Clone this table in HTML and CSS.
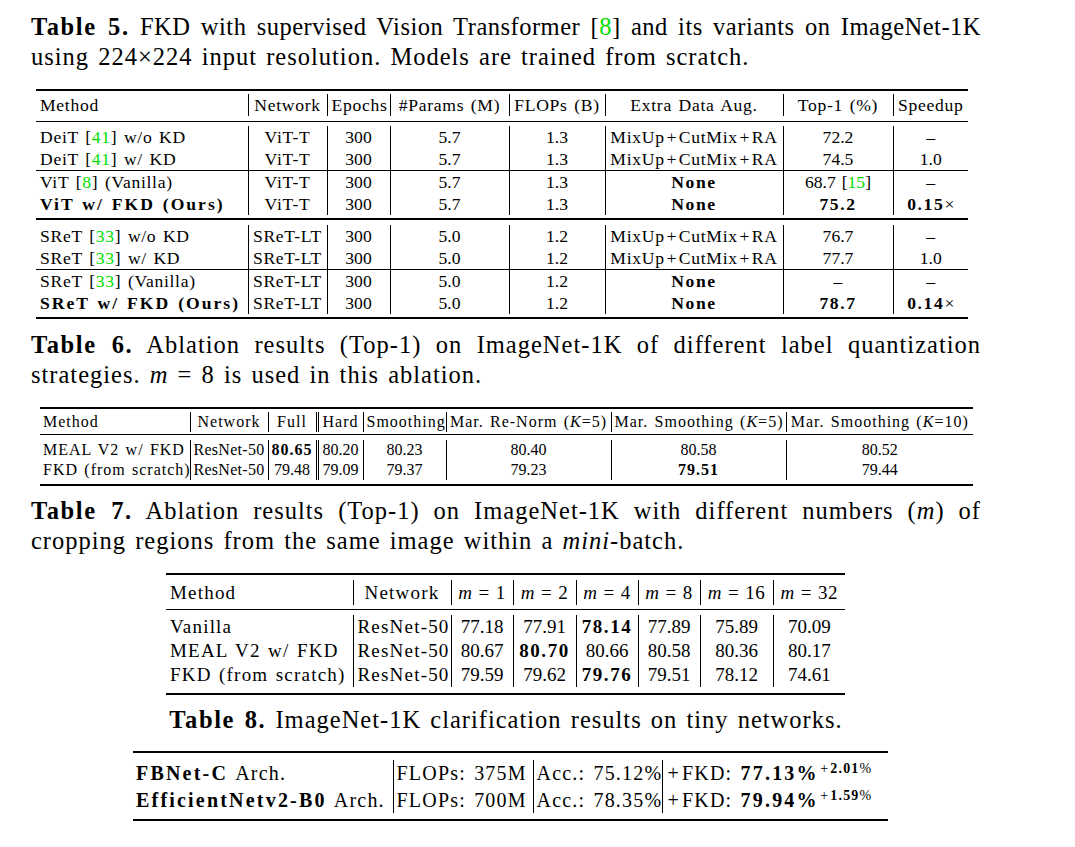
FILE: index.html
```html
<!DOCTYPE html>
<html lang="en">
<head>
<meta charset="utf-8">
<title>Tables</title>
<link rel="stylesheet" href="styles.css">
</head>
<body>
<div class="page">
  <p class="cap c5"><span class="j"><b>Table 5.</b> FKD with supervised Vision Transformer [<span class="cite">8</span>] and its variants on ImageNet-1K</span><span class="ln">using 224×224 input resolution. Models are trained from scratch.</span></p>

  <table class="tab t5">
    <colgroup><col><col><col><col><col><col><col><col></colgroup>
    <tr class="rl top"><td colspan="8"></td></tr>
    <tr class="h"><td class="l">Method</td><td class="b">Network</td><td class="b">Epochs</td><td class="b">#Params (M)</td><td class="b">FLOPs (B)</td><td class="b">Extra Data Aug.</td><td class="b">Top-1 (%)</td><td class="b">Speedup</td></tr>
    <tr class="rl mid"><td colspan="8"></td></tr>
    <tr><td class="l">DeiT [<span class="cite">41</span>] w/o KD</td><td class="b">ViT-T</td><td class="b">300</td><td class="b">5.7</td><td class="b">1.3</td><td class="b">MixUp<span class="pl">+</span>CutMix<span class="pl">+</span>RA</td><td class="b">72.2</td><td class="b">–</td></tr>
    <tr><td class="l">DeiT [<span class="cite">41</span>] w/ KD</td><td class="b">ViT-T</td><td class="b">300</td><td class="b">5.7</td><td class="b">1.3</td><td class="b">MixUp<span class="pl">+</span>CutMix<span class="pl">+</span>RA</td><td class="b">74.5</td><td class="b">1.0</td></tr>
    <tr class="hl"><td class="l">ViT [<span class="cite">8</span>] (Vanilla)</td><td class="b">ViT-T</td><td class="b">300</td><td class="b">5.7</td><td class="b">1.3</td><td class="b"><b>None</b></td><td class="b">68.7 [<span class="cite">15</span>]</td><td class="b">–</td></tr>
    <tr><td class="l"><b>ViT w/ FKD (Ours)</b></td><td class="b">ViT-T</td><td class="b">300</td><td class="b">5.7</td><td class="b">1.3</td><td class="b"><b>None</b></td><td class="b"><b>75.2</b></td><td class="b"><b>0.15</b>×</td></tr>
    <tr class="rl thick"><td colspan="8"></td></tr>
    <tr><td class="l">SReT [<span class="cite">33</span>] w/o KD</td><td class="b">SReT-LT</td><td class="b">300</td><td class="b">5.0</td><td class="b">1.2</td><td class="b">MixUp<span class="pl">+</span>CutMix<span class="pl">+</span>RA</td><td class="b">76.7</td><td class="b">–</td></tr>
    <tr><td class="l">SReT [<span class="cite">33</span>] w/ KD</td><td class="b">SReT-LT</td><td class="b">300</td><td class="b">5.0</td><td class="b">1.2</td><td class="b">MixUp<span class="pl">+</span>CutMix<span class="pl">+</span>RA</td><td class="b">77.7</td><td class="b">1.0</td></tr>
    <tr class="hl"><td class="l">SReT [<span class="cite">33</span>] (Vanilla)</td><td class="b">SReT-LT</td><td class="b">300</td><td class="b">5.0</td><td class="b">1.2</td><td class="b"><b>None</b></td><td class="b">–</td><td class="b">–</td></tr>
    <tr><td class="l"><b>SReT w/ FKD (Ours)</b></td><td class="b">SReT-LT</td><td class="b">300</td><td class="b">5.0</td><td class="b">1.2</td><td class="b"><b>None</b></td><td class="b"><b>78.7</b></td><td class="b"><b>0.14</b>×</td></tr>
    <tr class="rl bot"><td colspan="8"></td></tr>
  </table>

  <p class="cap c6"><span class="j"><b>Table 6.</b> Ablation results (Top-1) on ImageNet-1K of different label quantization</span><span class="ln">strategies. <i>m</i> = 8 is used in this ablation.</span></p>

  <table class="tab t6">
    <colgroup><col><col><col><col><col><col><col><col></colgroup>
    <tr class="rl top"><td colspan="8"></td></tr>
    <tr class="h"><td class="l">Method</td><td class="b">Network</td><td class="b">Full</td><td class="d">Hard</td><td class="b">Smoothing</td><td class="b">Mar. Re-Norm (<i>K</i>=5)</td><td class="b">Mar. Smoothing (<i>K</i>=5)</td><td class="b">Mar. Smoothing (<i>K</i>=10)</td></tr>
    <tr class="rl mid"><td colspan="8"></td></tr>
    <tr><td class="l">MEAL V2 w/ FKD</td><td class="b">ResNet-50</td><td class="b"><b>80.65</b></td><td class="d">80.20</td><td class="b">80.23</td><td class="b">80.40</td><td class="b">80.58</td><td class="b">80.52</td></tr>
    <tr><td class="l">FKD (from scratch)</td><td class="b">ResNet-50</td><td class="b">79.48</td><td class="d">79.09</td><td class="b">79.37</td><td class="b">79.23</td><td class="b"><b>79.51</b></td><td class="b">79.44</td></tr>
    <tr class="rl bot"><td colspan="8"></td></tr>
  </table>

  <p class="cap c7"><span class="j"><b>Table 7.</b> Ablation results (Top-1) on ImageNet-1K with different numbers (<i>m</i>) of</span><span class="ln">cropping regions from the same image within a <i>mini</i>-batch.</span></p>

  <table class="tab t7">
    <colgroup><col><col><col><col><col><col><col><col></colgroup>
    <tr class="rl top"><td colspan="8"></td></tr>
    <tr class="h"><td class="l">Method</td><td class="b">Network</td><td class="b"><i>m</i> = 1</td><td class="b"><i>m</i> = 2</td><td class="b"><i>m</i> = 4</td><td class="b"><i>m</i> = 8</td><td class="b"><i>m</i> = 16</td><td class="b"><i>m</i> = 32</td></tr>
    <tr class="rl mid"><td colspan="8"></td></tr>
    <tr><td class="l">Vanilla</td><td class="b">ResNet-50</td><td class="b">77.18</td><td class="b">77.91</td><td class="b"><b>78.14</b></td><td class="b">77.89</td><td class="b">75.89</td><td class="b">70.09</td></tr>
    <tr><td class="l">MEAL V2 w/ FKD</td><td class="b">ResNet-50</td><td class="b">80.67</td><td class="b"><b>80.70</b></td><td class="b">80.66</td><td class="b">80.58</td><td class="b">80.36</td><td class="b">80.17</td></tr>
    <tr><td class="l">FKD (from scratch)</td><td class="b">ResNet-50</td><td class="b">79.59</td><td class="b">79.62</td><td class="b"><b>79.76</b></td><td class="b">79.51</td><td class="b">78.12</td><td class="b">74.61</td></tr>
    <tr class="rl bot"><td colspan="8"></td></tr>
  </table>

  <p class="cap c8"><b>Table 8.</b> ImageNet-1K clarification results on tiny networks.</p>

  <table class="tab t8">
    <colgroup><col><col><col><col></colgroup>
    <tr class="rl top"><td colspan="4"></td></tr>
    <tr><td class="l"><b>FBNet-C</b> Arch.</td><td class="l b">FLOPs: 375M</td><td class="l b">Acc.: 75.12%</td><td class="l b"><span class="pl">+</span>FKD: <b>77.13%</b><sup><span class="pl">+</span><b>2.01</b>%</sup></td></tr>
    <tr><td class="l"><b>EfficientNetv2-B0</b> Arch.</td><td class="l b">FLOPs: 700M</td><td class="l b">Acc.: 78.35%</td><td class="l b"><span class="pl">+</span>FKD: <b>79.94%</b><sup><span class="pl">+</span><b>1.59</b>%</sup></td></tr>
    <tr class="rl bot"><td colspan="4"></td></tr>
  </table>
</div>
</body>
</html>
```

FILE: styles.css
```css
* { box-sizing: border-box; }

body {
  margin: 0;
  background: #fff;
  color: #000;
  font-family: "Liberation Serif", "Times New Roman", serif;
}

.page {
  width: 950px;
  margin-left: 31px;
  padding-top: 12px;
}

/* captions */
.cap {
  margin: 0;
  font-size: 24.5px;
  line-height: 30px;
  letter-spacing: 1px;
  word-spacing: 2px;
}
.cap b { letter-spacing: 1.6px; }
.cap .j {
  display: block;
  white-space: nowrap;
  text-align: justify;
  text-align-last: justify;
}
.cap.c5 .j { letter-spacing: 0.5px; word-spacing: 0; }
.cap .ln { display: block; }
.cap.c8 { text-align: center; }
.cap.c6 { margin-top: 11px; }
.cap.c7 { margin-top: 9px; }
.cap.c8 { margin-top: 9px; }

.cite { color: #00e000; }
.pl { padding: 0 0.1em; }

/* tables */
.tab {
  border-collapse: collapse;
  table-layout: fixed;
}
.tab td {
  padding: 0 4px;
  white-space: nowrap;
  text-align: center;
  vertical-align: middle;
}
.tab b { letter-spacing: 1.6px; }
.tab td.l { text-align: left; }
.tab td.b { border-left: 1px solid #000; }
.tab td.d { border-left: 3px double #000; }
.tab tr.hl td { border-top: 1px solid #000; }

.tab tr.rl td {
  padding: 0;
  font-size: 0;
  line-height: 0;
  background-image: linear-gradient(#000, #000);
  background-repeat: no-repeat;
}
.tab tr.top td { background-size: 100% 2px; background-position: 0 0; }
.tab tr.mid td { background-size: 100% 1px; }
.tab tr.thick td { height: 10px; background-size: 100% 2px; background-position: 0 3px; }
.tab tr.bot td { background-size: 100% 2px; }

/* Table 5 */
.t5 {
  width: 932px;
  margin: 17px 0 0 5px;
  font-size: 17.6px;
  line-height: 22px;
  letter-spacing: 0.7px;
  word-spacing: 1.5px;
}
.t5 td.l b { letter-spacing: 2px; }
.t5 tr:not(.h) td:nth-child(n+3):not(:nth-child(6)) { letter-spacing: 0; }
.t5 col:nth-child(1) { width: 212px; }
.t5 col:nth-child(2) { width: 79px; }
.t5 col:nth-child(3) { width: 63px; }
.t5 col:nth-child(4) { width: 119px; }
.t5 col:nth-child(5) { width: 96px; }
.t5 col:nth-child(6) { width: 178px; }
.t5 col:nth-child(7) { width: 110px; }
.t5 col:nth-child(8) { width: 75px; }
.t5 tr.top td { height: 5px; }
.t5 tr.mid td { height: 10px; background-position: 0 5px; }
.t5 tr.bot td { height: 5px; background-position: 0 3px; }

/* Table 6 */
.t6 {
  width: 933px;
  margin: 17px 0 0 9px;
  font-size: 16px;
  line-height: 20px;
  letter-spacing: 1px;
  word-spacing: 1.3px;
}
.t6 td { padding: 0 3px; }
.t6 tr:not(.h) td:nth-child(2) { letter-spacing: 0.3px; padding: 0 2px; }
.t6 tr:not(.h) td:nth-child(n+3) { letter-spacing: 0; }
.t6 tr:not(.h) td:nth-child(n+3) b { letter-spacing: 1px; }
.t6 col:nth-child(1) { width: 150px; }
.t6 col:nth-child(2) { width: 78px; }
.t6 col:nth-child(3) { width: 49px; }
.t6 col:nth-child(4) { width: 46px; }
.t6 col:nth-child(5) { width: 83px; }
.t6 col:nth-child(6) { width: 165px; }
.t6 col:nth-child(7) { width: 175px; }
.t6 col:nth-child(8) { width: 187px; }
.t6 tr.top td { height: 5px; }
.t6 tr.mid td { height: 8px; background-position: 0 2px; }
.t6 tr.bot td { height: 7px; background-position: 0 4px; }

/* Table 7 */
.t7 {
  width: 679px;
  margin: 17px 0 0 135px;
  font-size: 19px;
  line-height: 24px;
  letter-spacing: 1.2px;
  word-spacing: 1.5px;
}
.t7 tr.h td:nth-child(n+3) { letter-spacing: 0.4px; word-spacing: 1px; }
.t7 tr:not(.h) td:nth-child(n+3) { letter-spacing: 0; }
.t7 col:nth-child(1) { width: 187px; }
.t7 col:nth-child(2) { width: 98px; }
.t7 col:nth-child(3) { width: 62px; }
.t7 col:nth-child(4) { width: 63px; }
.t7 col:nth-child(5) { width: 62px; }
.t7 col:nth-child(6) { width: 62px; }
.t7 col:nth-child(7) { width: 73px; }
.t7 col:nth-child(8) { width: 72px; }
.t7 tr.top td { height: 7px; }
.t7 tr.h td { line-height: 25px; }
.t7 tr.mid td { height: 10px; background-position: 0 4px; }
.t7 tr.bot td { height: 9px; background-position: 0 6px; }

/* Table 8 */
.t8 {
  width: 755px;
  margin: 16px 0 0 102px;
  font-size: 20px;
  line-height: 26.5px;
  letter-spacing: 1.2px;
  word-spacing: 2px;
}
.t8 b { letter-spacing: 2.2px; }
.t8 td { padding: 0 3px; }
.t8 col:nth-child(1) { width: 260px; }
.t8 col:nth-child(2) { width: 140px; }
.t8 col:nth-child(3) { width: 129px; }
.t8 col:nth-child(4) { width: 226px; }
.t8 tr.top td { height: 9px; }
.t8 tr.bot td { height: 8px; background-position: 0 6px; }
.t8 sup {
  font-size: 14px;
  line-height: 0;
  vertical-align: 7px;
  letter-spacing: 0.8px;
}
.t8 sup b { letter-spacing: 1.2px; }
```
